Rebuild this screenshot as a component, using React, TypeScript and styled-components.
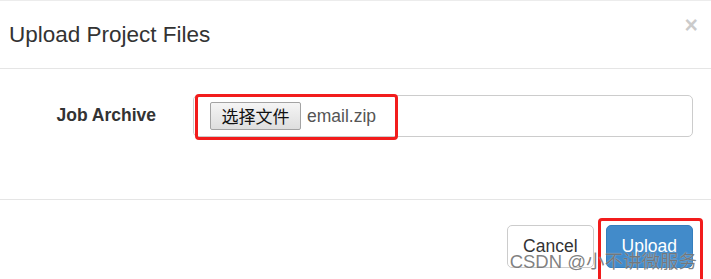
import React from "react";
import styled, { createGlobalStyle } from "styled-components";

const GlobalStyle = createGlobalStyle`
  html, body {
    margin: 0;
    padding: 0;
    background: #fff;
    overflow: hidden;
  }
  body {
    font-family: "Liberation Sans", Arial, "Noto Sans CJK SC", sans-serif;
    color: #333;
  }
`;

const Modal = styled.div`
  position: relative;
  width: 711px;
  height: 279px;
  border-top: 1px solid #ececec;
  box-sizing: border-box;
  overflow: hidden;
`;

const Header = styled.div`
  display: flex;
  align-items: center;
  justify-content: space-between;
  height: 67px;
  padding: 0 13px 0 9px;
  border-bottom: 1px solid #e5e5e5;
`;

const Title = styled.h4`
  margin: 0;
  font-size: 22.5px;
  font-weight: normal;
  line-height: 1;
  color: #333;
  padding-top: 2px;
`;

const Close = styled.button`
  border: 0;
  background: none;
  padding: 0;
  font-family: "Liberation Sans", Arial, sans-serif;
  font-size: 23px;
  font-weight: bold;
  line-height: 1;
  color: #000;
  opacity: 0.2;
  margin-top: -18px;
  cursor: pointer;
`;

const Body = styled.div`
  height: 131px;
  box-sizing: border-box;
  padding-top: 26px;
  border-bottom: 1px solid #e5e5e5;
`;

const FormRow = styled.div`
  display: flex;
  align-items: center;
  gap: 37px;
`;

const Label = styled.label`
  width: 156px;
  text-align: right;
  font-weight: bold;
  font-size: 17.5px;
  color: #333;
  padding-bottom: 2px;
`;

const InputBox = styled.div`
  position: relative;
  display: flex;
  align-items: center;
  gap: 6px;
  width: 500px;
  height: 42px;
  box-sizing: border-box;
  padding-left: 16px;
  border: 1px solid #ccc;
  border-radius: 5px;
`;

const FileButton = styled.button`
  height: 28px;
  width: 91px;
  padding: 0;
  border: 1px solid #a3a3a3;
  border-radius: 2px;
  background: linear-gradient(#f5f5f5, #dedede);
  font-family: "Noto Sans CJK SC", sans-serif;
  font-size: 17px;
  color: #111;
  line-height: 26px;
`;

const FileName = styled.span`
  font-size: 17.5px;
  color: #555;
`;

const Highlight = styled.div<{ $left: number; $top: number; $w: number; $h: number }>`
  position: absolute;
  left: ${(p) => p.$left}px;
  top: ${(p) => p.$top}px;
  width: ${(p) => p.$w}px;
  height: ${(p) => p.$h}px;
  box-sizing: border-box;
  border: 3px solid #f21c1c;
  border-radius: 4px;
  pointer-events: none;
`;

const Footer = styled.div`
  position: relative;
  display: flex;
  justify-content: flex-end;
  gap: 12px;
  padding: 25px 18px 0 0;
`;

const Button = styled.button<{ $primary?: boolean }>`
  height: 43px;
  padding: 0 15px;
  font-family: "Liberation Sans", Arial, sans-serif;
  font-size: 17.5px;
  border-radius: 5px;
  border: 1px solid ${(p) => (p.$primary ? "#357ebd" : "#ccc")};
  background: ${(p) => (p.$primary ? "#428bca" : "#fff")};
  color: ${(p) => (p.$primary ? "#fff" : "#333")};
`;

const Watermark = styled.div`
  position: absolute;
  right: 14px;
  bottom: 8px;
  font-family: "Liberation Sans", Arial, "Noto Sans CJK SC", sans-serif;
  font-size: 18.5px;
  line-height: 1;
  color: rgba(95, 95, 95, 0.8);
  text-shadow: 0 0 1px rgba(255, 255, 255, 0.7);
  white-space: nowrap;
  pointer-events: none;
`;

export default function App() {
  return (
    <>
      <GlobalStyle />
      <Modal>
        <Header>
          <Title>Upload Project Files</Title>
          <Close aria-label="Close">×</Close>
        </Header>
        <Body>
          <FormRow>
            <Label>Job Archive</Label>
            <InputBox>
              <FileButton>选择文件</FileButton>
              <FileName>email.zip</FileName>
              <Highlight $left={1} $top={-2} $w={203} $h={46} />
            </InputBox>
          </FormRow>
        </Body>
        <Footer>
          <Button>Cancel</Button>
          <Button $primary>Upload</Button>
          <Highlight $left={598} $top={18} $w={105} $h={70} />
        </Footer>
        <Watermark>CSDN @小不讲微服务</Watermark>
      </Modal>
    </>
  );
}
